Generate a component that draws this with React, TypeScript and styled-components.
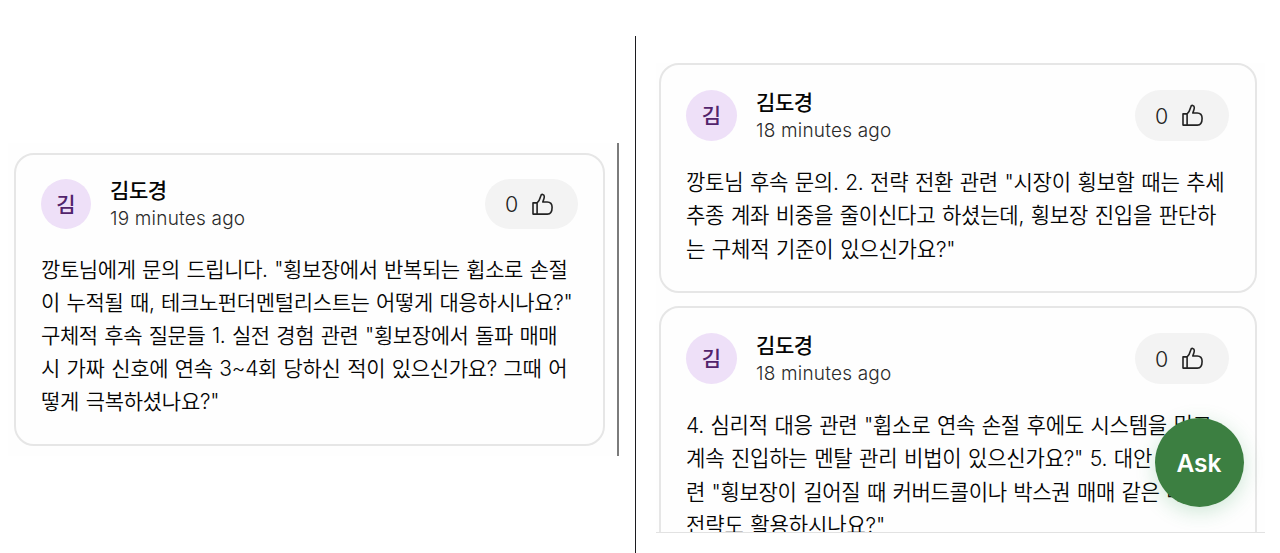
import React from "react";
import styled, { createGlobalStyle } from "styled-components";

const GlobalStyle = createGlobalStyle`
  * { box-sizing: border-box; }
  body {
    margin: 0;
    background: #fff;
    font-family: Inter, "Noto Sans CJK KR", sans-serif;
    color: #050505;
  }
`;

const Page = styled.main`
  display: flex;
  height: 553px;
  overflow: hidden;
`;

const LeftPane = styled.section`
  width: 635px;
  padding: 143px 16px 0 8px;
`;

const LeftFeed = styled.div`
  height: 313px;
  padding: 10px 12px 0 6.4px;
  background: #fefefe;
  border-right: 2px solid #7b7b7b;
`;

const RightPane = styled.section`
  position: relative;
  flex: 1;
  padding: 27px 0 0 20px;
  margin-top: 36px;
  border-left: 1px solid #1c1c20;
`;

const RightFeed = styled.div`
  display: flex;
  flex-direction: column;
  gap: 13px;
  width: 609px;
  height: 470px;
  padding: 0 8.5px 0 3px;
  overflow: hidden;
  background: #fefefe;
  border-bottom: 1px solid #e2e2e2;
`;

const Card = styled.article<{ $large?: boolean }>`
  flex: none;
  height: ${(p) => (p.$large ? 230 : 292.5)}px;
  padding: ${(p) => (p.$large ? 25 : 24)}px;
  padding-right: ${(p) => (p.$large ? 25.5 : 25)}px;
  padding-left: ${(p) => (p.$large ? 25 : 24.6)}px;
  border: 2px solid #e6e6e6;
  border-radius: 20px;
  background: #fefefe;

  & + & { height: 264px; }
`;

const Header = styled.header<{ $large?: boolean }>`
  display: flex;
  align-items: center;
  height: ${(p) => (p.$large ? 51 : 50)}px;
`;

const Avatar = styled.div<{ $large?: boolean }>`
  display: flex;
  align-items: center;
  justify-content: center;
  width: ${(p) => (p.$large ? 51 : 50)}px;
  height: ${(p) => (p.$large ? 51 : 50)}px;
  padding-bottom: 3px;
  border-radius: 50%;
  background: #eee0f8;
  color: #52246c;
  font-size: 21px;
  font-weight: 500;
`;

const Author = styled.div`
  flex: 1;
  margin-left: 19px;
`;

const Name = styled.div`
  height: 27px;
  line-height: 26px;
  font-size: 21px;
  letter-spacing: -0.4px;
  font-weight: 500;
  white-space: nowrap;
`;

const Time = styled.div`
  height: 25px;
  line-height: 27px;
  font-size: 19px;
  letter-spacing: 0.2px;
  font-weight: 350;
  color: #2a2a2a;
`;

const LikeButton = styled.button<{ $large?: boolean }>`
  display: flex;
  align-items: center;
  gap: 14px;
  width: ${(p) => (p.$large ? 94 : 93)}px;
  height: 100%;
  padding: 0 0 0 20px;
  border: 0;
  border-radius: 26px;
  background: #f3f3f3;
  color: #222;
  font: 350 21.5px Inter, sans-serif;
`;

const Body = styled.div<{ $large?: boolean }>`
  margin-top: ${(p) => (p.$large ? 25.2 : 24.2)}px;
  font-size: ${(p) => (p.$large ? 21.1 : 21)}px;
  font-weight: 350;
  line-height: ${(p) => (p.$large ? 33.2 : 33)}px;
  white-space: nowrap;
`;

const Line = styled.div<{ $tracking: number }>`
  letter-spacing: ${(p) => p.$tracking}px;
  word-spacing: 1px;
`;

const AskButton = styled.button`
  position: absolute;
  left: 519px;
  top: 382px;
  width: 89px;
  height: 89px;
  padding: 0 1px 0 0;
  border: 0;
  border-radius: 50%;
  background: #3c7f41;
  box-shadow: 0 5px 20px rgba(38, 150, 75, 0.22);
  color: #fff;
  font: 600 24.5px Inter, sans-serif;
`;

const ThumbIcon = () => (
  <svg width="21" height="23" viewBox="0.8 0.9 21 23" fill="none" stroke="currentColor" strokeWidth="1.6" strokeLinejoin="round">
    <path d="M1.8 10.8H5.9V22H1.8ZM5.9 10.8C8.3 9 8.8 6.3 9.6 3.6C10.1 1.7 13.2 1.8 13.1 4.7C13 6.7 12.1 8.2 11.6 9.9H16C19.5 9.9 20.9 12.1 20.9 15.2C20.9 19.4 19.2 22 16.2 22H5.9" />
  </svg>
);

type PostLine = [text: string, tracking: number];

interface PostProps {
  time: string;
  lines: PostLine[];
  large?: boolean;
}

const Post = ({ time, lines, large }: PostProps) => (
  <Card $large={large}>
    <Header $large={large}>
      <Avatar $large={large}>김</Avatar>
      <Author>
        <Name>김도경</Name>
        <Time>{time}</Time>
      </Author>
      <LikeButton $large={large} aria-label="Like">
        <span>0</span>
        <ThumbIcon />
      </LikeButton>
    </Header>
    <Body $large={large}>
      {lines.map(([text, tracking]) => (
        <Line key={text} $tracking={tracking}>{text}</Line>
      ))}
    </Body>
  </Card>
);

const firstPost: PostLine[] = [
  ['깡토님에게 문의 드립니다. "횡보장에서 반복되는 휩소로 손절', -0.4],
  ['이 누적될 때, 테크노펀더멘털리스트는 어떻게 대응하시나요?"', -0.36],
  ['구체적 후속 질문들 1. 실전 경험 관련 "횡보장에서 돌파 매매', -0.39],
  ["시 가짜 신호에 연속 3~4회 당하신 적이 있으신가요? 그때 어", -0.32],
  ['떻게 극복하셨나요?"', -0.28],
];

const secondPost: PostLine[] = [
  ['깡토님 후속 문의. 2. 전략 전환 관련 "시장이 횡보할 때는 추세', -0.31],
  ["추종 계좌 비중을 줄이신다고 하셨는데, 횡보장 진입을 판단하", -0.29],
  ['는 구체적 기준이 있으신가요?"', -0.25],
];

const thirdPost: PostLine[] = [
  ['4. 심리적 대응 관련 "휩소로 연속 손절 후에도 시스템을 믿고', -0.31],
  ['계속 진입하는 멘탈 관리 비법이 있으신가요?" 5. 대안 전략 관', -0.27],
  ['련 "횡보장이 길어질 때 커버드콜이나 박스권 매매 같은 대체', -0.37],
  ['전략도 활용하시나요?"', -0.2],
];

export default function App() {
  return (
    <>
      <GlobalStyle />
      <Page>
        <LeftPane>
          <LeftFeed>
            <Post time="19 minutes ago" lines={firstPost} />
          </LeftFeed>
        </LeftPane>
        <RightPane>
          <RightFeed>
            <Post large time="18 minutes ago" lines={secondPost} />
            <Post large time="18 minutes ago" lines={thirdPost} />
          </RightFeed>
          <AskButton>Ask</AskButton>
        </RightPane>
      </Page>
    </>
  );
}
